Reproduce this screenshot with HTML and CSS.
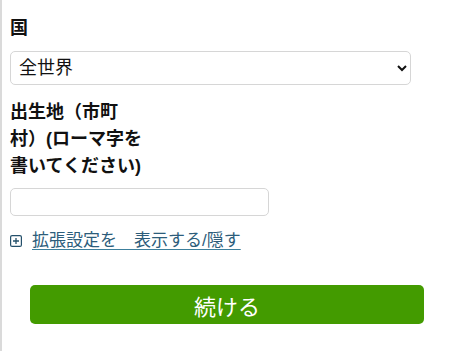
FILE: index.html
```html
<!DOCTYPE html>
<html lang="ja">
<head>
	<meta charset="UTF-8">
	<title>出生地</title>
	<link rel="stylesheet" href="styles.css">
</head>
<body>
	<div class="page">
		<div class="field">
			<label class="label" for="country">国</label>
			<select class="select" id="country">
				<option>全世界</option>
			</select>
		</div>
		<div class="field">
			<label class="label narrow" for="birthplace">出生地（市町村）(ローマ字を書いてください)</label>
			<input class="text-input" type="text" id="birthplace">
		</div>
		<a class="toggle" href="javascript:;">
			<svg class="toggle-icon" width="12" height="12" viewBox="0 0 12 12">
				<rect x="0.6" y="0.6" width="10.8" height="10.8" rx="1.5" fill="none" stroke="#24506b" stroke-width="1.2"/>
				<path d="M6 3v6M3 6h6" stroke="#24506b" stroke-width="1.3"/>
			</svg><span class="toggle-text">拡張設定を　表示する/隠す</span>
		</a>
		<button class="submit" type="button">続ける</button>
	</div>
</body>
</html>
```

FILE: styles.css
```css
body {
	margin: 0;
	padding: 0;
	font-family: "Liberation Sans", "Noto Sans CJK JP", sans-serif;
	color: #111;
}
.page {
	border-left: 2px solid #dadada;
	min-height: 351px;
	box-sizing: border-box;
	padding: 15px 0 0 8px;
}
.label {
	display: block;
	font-size: 18px;
	line-height: 27px;
	font-weight: bold;
}
.narrow {
	width: 132px;
	margin-top: 14px;
}
.select {
	display: block;
	box-sizing: border-box;
	width: 401px;
	height: 34px;
	margin-top: 9px;
	padding: 0 4px 0 4px;
	font-family: inherit;
	font-size: 18px;
	color: #111;
	background: #fff;
	border: 1px solid #d6d6d6;
	border-radius: 5px;
}
.text-input {
	display: block;
	box-sizing: border-box;
	width: 259px;
	height: 28px;
	margin-top: 8px;
	border: 1px solid #d6d6d6;
	border-radius: 5px;
	font-size: 16px;
}
.toggle {
	display: flex;
	align-items: center;
	margin-top: 12px;
	font-size: 17px;
	line-height: 26px;
	color: #2d5d7b;
	text-decoration: none;
}
.toggle-icon {
	margin-right: 10px;
}
.toggle-text {
	text-decoration: underline;
	text-decoration-color: #3c7f9c;
	text-underline-offset: 3px;
}
.submit {
	display: block;
	width: 394px;
	height: 39px;
	margin: 31px 0 0 20px;
	border: none;
	border-radius: 5px;
	background: #439b00;
	color: #fff;
	font-family: inherit;
	font-size: 22px;
}
```
